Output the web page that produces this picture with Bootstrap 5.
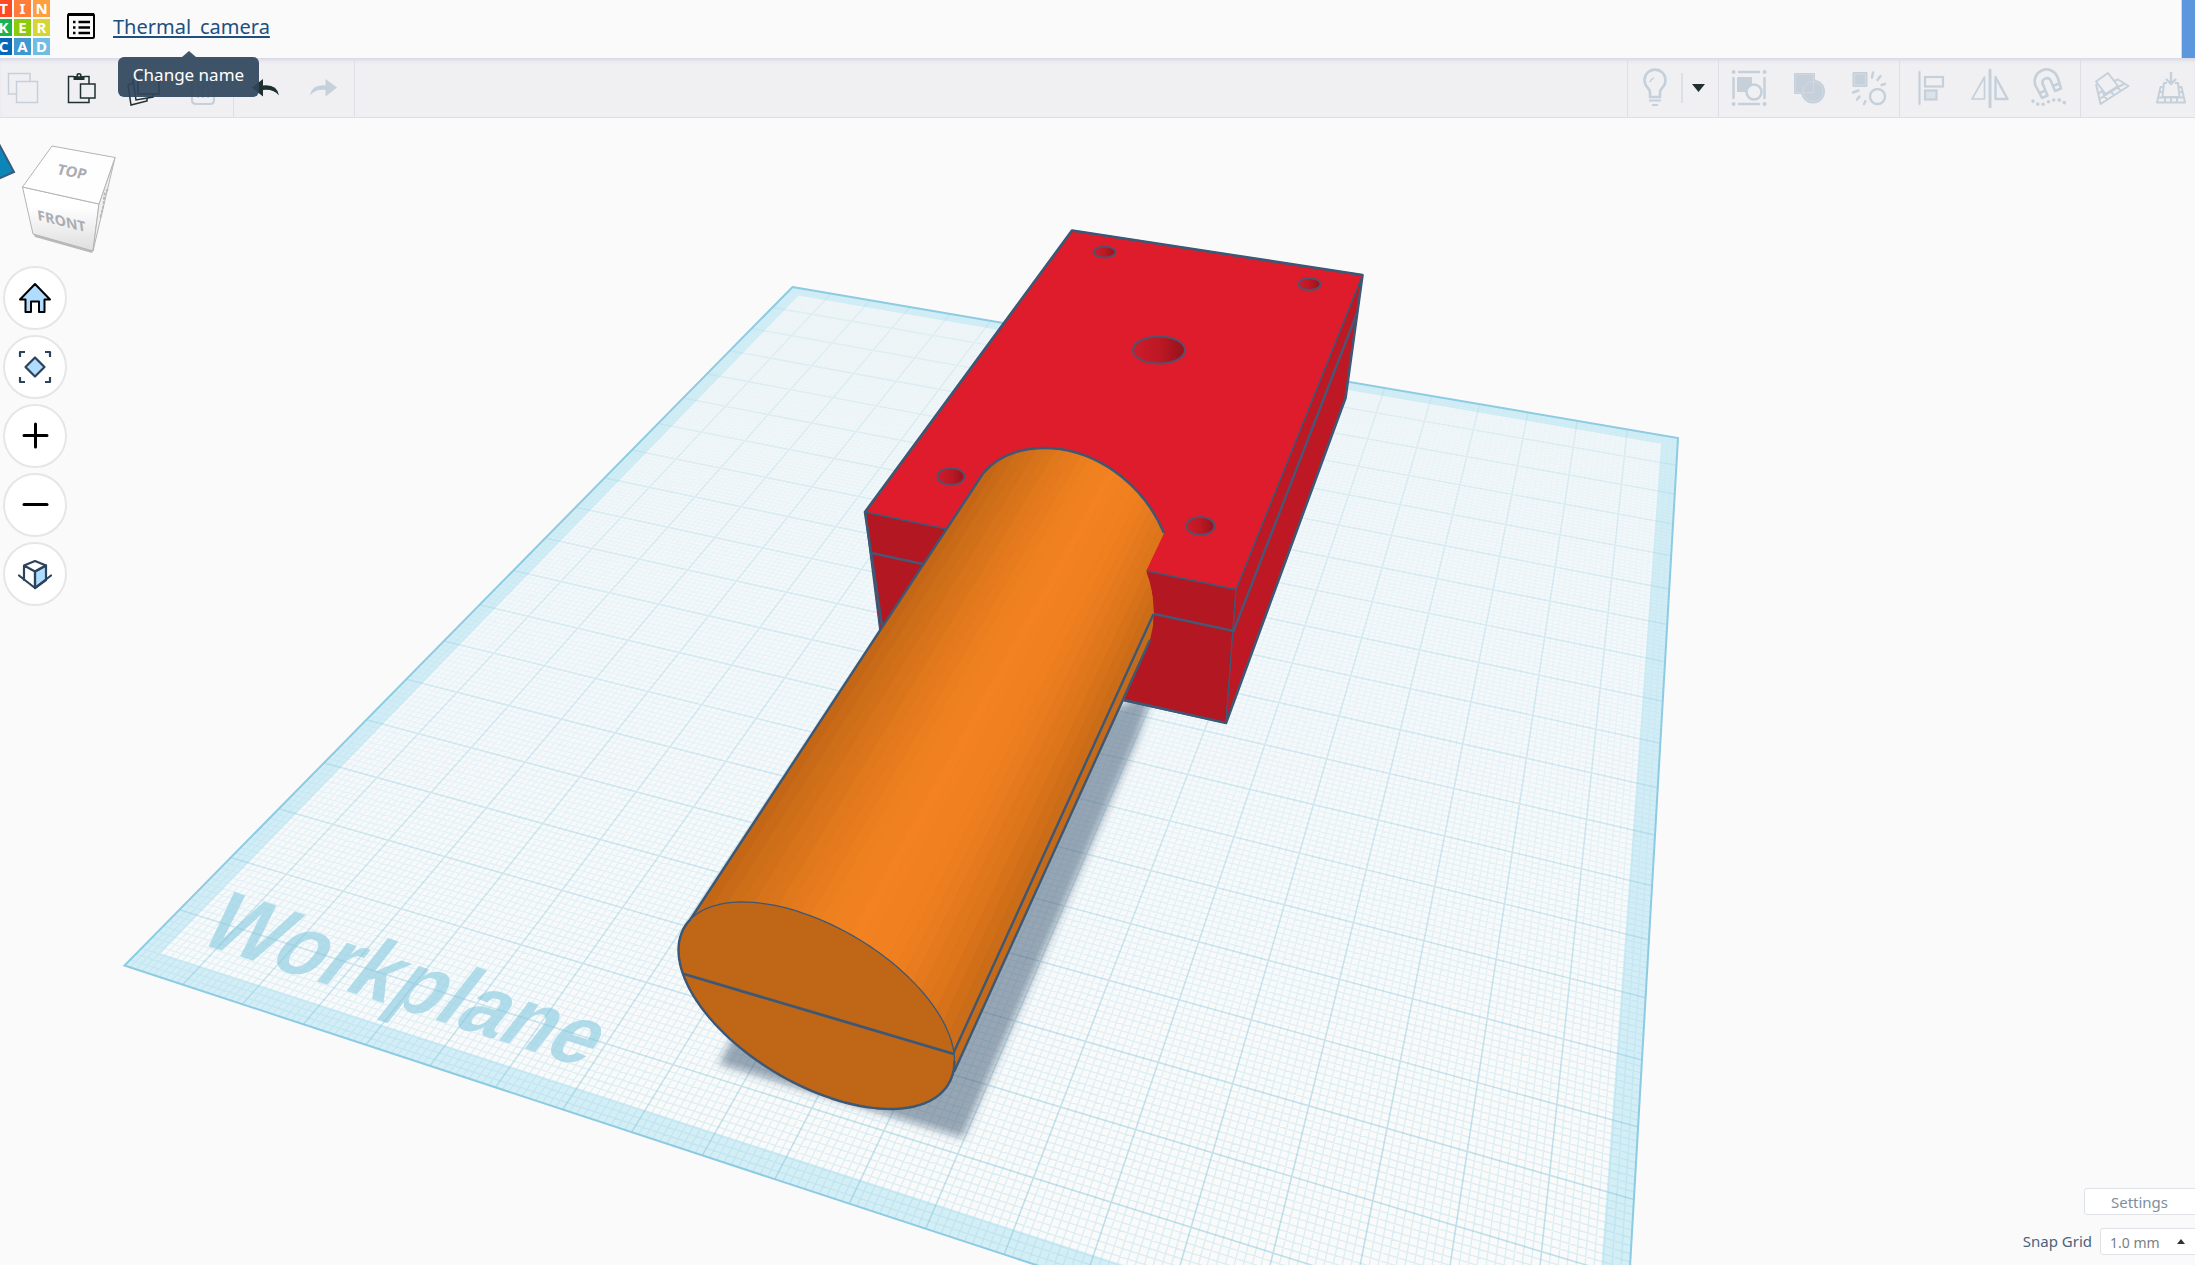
<!DOCTYPE html>
<html lang="en">
<head>
<meta charset="utf-8">
<meta name="viewport" content="width=device-width, initial-scale=1">
<title>Thermal_camera</title>
<link href="https://cdn.jsdelivr.net/npm/bootstrap@5.3.0/dist/css/bootstrap.min.css" rel="stylesheet">
<script src="https://cdn.jsdelivr.net/npm/bootstrap@5.3.0/dist/js/bootstrap.bundle.min.js"></script>
<style>
  body { font-family: "Noto Sans", sans-serif; background: #fafafb; color: #4c6279; }
  .app-header { height: 58px; background: #fafafa; }
  .logo-grid { display: grid; grid-template-columns: repeat(3, 17px); gap: 2px; margin: 0 0 0 -5px; text-decoration: none; }
  .logo-grid span { height: 17px; font: 700 15px/17px "Noto Sans", sans-serif; color: #fff; text-align: center; }
  .menu-btn { margin-left: 17px; margin-top: 12px; width: 28px; height: 28px; }
  .design-name { margin: 13px 0 0 18px; font-size: 20px; line-height: 28px; color: #1d4f80; text-decoration: underline; text-decoration-thickness: 2px; text-underline-offset: 2px; }
  .side-tab { width: 14px; background: #5c96dc; border-left: 1px solid #cbd9ea; }
  .tip { position: absolute; left: 118px; top: 57px; z-index: 5; background: rgba(48,69,92,.92); color: #fff; border-radius: 6px; width: 141px; height: 40px; font-size: 17px; line-height: 35px; text-align: center; }
  .tip::before { content: ""; position: absolute; left: 64px; top: -6px; border: 7px solid transparent; border-top: 0; border-bottom: 6px solid rgba(48,69,92,.92); }
  .tools { height: 60px; background: #f0f0f3; border-bottom: 1px solid #dcdfe4; box-shadow: inset 0 4px 4px -2px #d3d4e2; overflow: hidden; }
  .tools-left { margin-left: -7px; }
  .tools-right { margin-right: -6px; }
  .tool-group { display: flex; border-right: 1px solid #dcdfe4; }
  .tools-right .tool-group { border-right: 0; border-left: 1px solid #dcdfe4; }
  .tool { width: 60px; color: #c5d0db; }
  .tool.live { color: #1f302f; }
  .tool.bulb { width: 53px; }
  .tool.pick { width: 37px; padding-right: 2px; }
  .plain { background: none; border: 0; padding: 0; display: flex; align-items: center; justify-content: center; }
  svg { display: block; flex: none; fill: none; stroke: currentColor; }
  .stage { min-height: 0; overflow: hidden; }
  .scene { width: 100%; height: 100%; stroke: none; }
  .view-cube { position: absolute; left: 0; top: 20px; stroke: none; }
  .view-nav { position: absolute; left: 3px; top: 148px; display: flex; flex-direction: column; gap: 5px; }
  .nav-round { width: 64px; height: 64px; border: 2px solid #e6e6e8; border-radius: 50%; background: #fff; color: #2d435c; }
  .nav-round.ink { color: #000; }
  .corner-panel { position: absolute; right: -6px; bottom: 10px; display: flex; flex-direction: column; align-items: flex-end; gap: 13px; font-size: 15px; line-height: 27px; }
  .settings-btn { width: 117px; height: 27px; padding: 0 6px 0 0; border: 1px solid #dfe2e6; border-radius: 3px; background: #fff; color: #808f9e; font-size: 15px; line-height: 20px; }
  .snap-box { position: relative; margin-left: 8px; }
  .snap-box select { display: block; appearance: none; width: 101px; height: 27px; padding: 0 0 0 9px; border: 1px solid #dfe2e6; border-radius: 3px; background: #fff; color: #7c7f83; font-size: 14px; }
  .snap-box svg { position: absolute; right: 16px; top: 11px; pointer-events: none; }
</style>
</head>
<body class="vh-100 overflow-hidden d-flex flex-column">

<header class="app-header d-flex align-items-start flex-shrink-0">
  <a href="#" class="logo-grid" aria-label="Tinkercad">
    <span style="background:#ff4a26">T</span><span style="background:#ff7d3b">I</span><span style="background:#ff9f3e">N</span>
    <span style="background:#17b451">K</span><span style="background:#8ccb0b">E</span><span style="background:#d6d534">R</span>
    <span style="background:#0067b9">C</span><span style="background:#3f98cf">A</span><span style="background:#6fbde2">D</span>
  </a>
  <button class="plain menu-btn" aria-label="Designs list">
    <svg width="28" height="28" viewBox="0 0 28 28"><rect x="1" y="2" width="26" height="24" rx="1.500" stroke="#000" stroke-width="2"/><path d="M1 2.500h26" stroke="#000" stroke-width="3"/><path d="M6 10h2.500M11.500 10h11.500M6 15.500h2.500M11.500 15.500h11.500M6 21h2.500M11.500 21h11.500" stroke="#000" stroke-width="2.600"/></svg>
  </button>
  <a href="#" class="design-name">Thermal_camera</a>
  <div class="side-tab ms-auto align-self-stretch"></div>
</header>
<div class="tip" role="tooltip">Change name</div>

<div class="tools d-flex justify-content-between flex-shrink-0">
  <div class="tools-left d-flex">
    <div class="tool-group">
      <button class="plain tool" aria-label="Copy"><svg width="40" height="40" stroke-width="1.500"><path d="M13 26H5.500V5.500H27V13"/><rect x="13.500" y="13.500" width="21" height="21"/></svg></button>
      <button class="plain tool live" aria-label="Paste"><svg width="40" height="40" stroke-width="1.500"><path d="M11 8.500H5.500v26H26V30M21 8.500h5V16"/><path d="M10.500 12V8h3V6q2-2 5 0v2h3v4z" fill="currentColor" stroke="none"/><circle cx="16" cy="7.500" r="1" fill="#f0f0f3" stroke="none"/><rect x="17.500" y="16" width="14.500" height="14"/></svg></button>
      <button class="plain tool live" aria-label="Duplicate"><svg width="40" height="40" stroke-width="1.500"><rect x="15" y="6" width="21" height="20"/><path d="M15 10l-5 2 3 20 17-3v-3"/><path d="M10 15l-5 2 3 20 16-4v-3"/></svg></button>
      <button class="plain tool" aria-label="Delete"><svg width="40" height="40" stroke-width="2.200"><path d="M6 9h28M15 9V5h10v4M9 10v22q0 4 4 4h14q4 0 4-4V10M15 14v16M20 14v16M25 14v16"/></svg></button>
    </div>
    <div class="tool-group">
      <button class="plain tool live" aria-label="Undo"><svg width="40" height="40"><path d="M8 19.500L19 11v6.500Q33 16 35 27.500 30 21 19 22v6.500z" fill="currentColor" stroke="none"/></svg></button>
      <button class="plain tool" aria-label="Redo"><svg width="40" height="40"><path d="M33 19.500L21.500 11v6.500Q8 16 6 27.500 11 21 21.500 22v6.500z" fill="currentColor" stroke="none"/></svg></button>
    </div>
  </div>
  <div class="tools-right d-flex">
    <div class="tool-group">
      <button class="plain tool bulb" aria-label="Show all"><svg width="40" height="40"><path d="M15 29v-4q0-3-2.500-5.500a10.500 10.500 0 1 1 15 0Q25 22 25 25v4z" stroke-width="2.600"/><path d="M15 14q1-3 4-4" stroke-width="1.600"/><path d="M14 32.500h12M17 37h6" stroke-width="2.200"/></svg></button>
      <button class="plain tool pick live" aria-label="Visibility options"><svg width="35" height="40"><path d="M1 5v30" stroke="#dcdfe4" stroke-width="2"/><path d="M11 16h13l-6.500 8z" fill="currentColor" stroke="none"/></svg></button>
    </div>
    <div class="tool-group">
      <button class="plain tool" aria-label="Group"><svg width="40" height="40" stroke-width="2.500" stroke-linecap="round"><path d="M10 4h20M10 36h20M4.500 10v20M35.500 10v20"/><path d="M4.500 4h.1M35.500 4h.1M4.500 36h.1M35.500 36h.1" stroke-width="4"/><rect x="8" y="9" width="15" height="15" rx="1" fill="currentColor" stroke="none"/><circle cx="25" cy="24" r="7.500" fill="#f0f0f3"/></svg></button>
      <button class="plain tool" aria-label="Union"><svg width="40" height="40"><rect x="5" y="5" width="21" height="21" rx="1" fill="currentColor" stroke="none"/><circle cx="24" cy="23.500" r="12" fill="currentColor" stroke="none"/><rect x="6.500" y="6.500" width="18" height="18" stroke="#d3dce4" stroke-width=".7"/><circle cx="24" cy="23.500" r="10" stroke="#d3dce4" stroke-width=".7"/></svg></button>
      <button class="plain tool" aria-label="Ungroup"><svg width="40" height="40" stroke-width="2.400" stroke-linecap="round"><rect x="3.500" y="4" width="15" height="15" rx="1" fill="currentColor" stroke="none"/><rect x="5.500" y="6" width="11" height="11" stroke="#dbe2e9" stroke-width=".7"/><circle cx="28.500" cy="28.500" r="7.500"/><path d="M24 4.500l-1 5M31.500 8l-3 4M36 16l-3.500 1M4 24.500l5.500-2M8 31.500l2.500-3M15 36l1.500-3"/></svg></button>
    </div>
    <div class="tool-group">
      <button class="plain tool" aria-label="Align"><svg width="40" height="40" stroke-width="2.200" stroke-linecap="round"><path d="M9.500 4v32"/><rect x="15" y="9" width="18" height="9.500"/><rect x="15" y="22.500" width="11.500" height="9" fill="#dbe2e9"/></svg></button>
      <button class="plain tool" aria-label="Mirror"><svg width="40" height="40" stroke-linejoin="round"><path d="M20 2v37" stroke-width="3" stroke-linecap="round"/><path d="M14.500 9v22H2z" stroke-width="1.700"/><path d="M25.500 9v22H37.500z" stroke-width="2.400"/></svg></button>
      <button class="plain tool" aria-label="Magnet"><svg width="40" height="40" stroke-width="2.600"><path d="M12 30L5.500 17.500a11.500 11.500 0 0 1 22-8.500L31 20.500l-6 2.500-4.500-11a4.500 4.500 0 0 0-8 3.500l5 12z" stroke-linejoin="round"/><path d="M9.500 25l6-2.500M23 18l6-2.500"/><path d="M3 33q6 6 13 2t13-3l8 4" stroke-width="3.400" stroke-dasharray=".1 5.500" stroke-linecap="round"/></svg></button>
    </div>
    <div class="tool-group">
      <button class="plain tool" aria-label="Workplane"><svg width="40" height="40" stroke-width="2" stroke-linejoin="round"><path d="M5 13.500L17 5l10 13-12.500 8z"/><path d="M5 16l4.500 20L37.500 18 27 11.500l-3 1M7 26l4-3 3 4M8.500 31l22-14M16 31.500l-4-6M23 27l-4-4M30 23l-4-4M33 16l-4 2"/></svg></button>
      <button class="plain tool" aria-label="Drop"><svg width="40" height="40" stroke-width="2" stroke-linejoin="round"><path d="M20 4v11M15 11l5 5 5-5" stroke-width="2.400"/><path d="M16 15h-3l-1.500 14h17L27 15h-3M12 19H9.500L6 34.500h28L30.500 19H28M8 29.500h24M14 30v4M20 30v4M26 30v4M9 24h2M29 24h2"/></svg></button>
    </div>
  </div>
</div>

<main class="stage flex-grow-1 position-relative">
  <svg class="scene" viewBox="0 118 2195 1147" preserveAspectRatio="xMidYMid slice" role="img" aria-label="3D view of the thermal camera on the workplane">
    <defs>
      <filter id="soft" x="-10%" y="-10%" width="120%" height="120%"><feGaussianBlur stdDeviation="4"/></filter>
      <linearGradient id="hole"><stop offset="0" stop-color="#cf1b29"/><stop offset=".5" stop-color="#bd1824"/><stop offset="1" stop-color="#94121c"/></linearGradient>
      <linearGradient id="tint" x1="0" y1="0" x2="0" y2="1"><stop offset="0" stop-color="#eff5f7"/><stop offset=".25" stop-color="#f4f8fa"/><stop offset=".7" stop-color="#fafafa"/></linearGradient>
      <linearGradient id="fineLine" gradientUnits="userSpaceOnUse" x1="0" y1="287" x2="0" y2="1200"><stop offset="0" stop-color="#8fd0e2" stop-opacity=".03"/><stop offset=".4" stop-color="#8fd0e2" stop-opacity=".12"/><stop offset="1" stop-color="#8fd0e2" stop-opacity=".3"/></linearGradient>
      <linearGradient id="boldLine" gradientUnits="userSpaceOnUse" x1="0" y1="287" x2="0" y2="1200"><stop offset="0" stop-color="#7fc3da" stop-opacity=".13"/><stop offset=".4" stop-color="#7fc3da" stop-opacity=".27"/><stop offset="1" stop-color="#7fc3da" stop-opacity=".48"/></linearGradient>
      <clipPath id="barrel"><path d="M983 473.500C1000 453 1028 445 1060 449 1105 456 1145 488 1164 533L1146 571Q1154 592 1153.500 614L953 1054 690 920z"/></clipPath>
    </defs>
    <path id="plane" fill="url(#tint)"/>
    <path id="band" fill="#cdebf4" fill-opacity=".85" fill-rule="evenodd"/>
    <text transform="matrix(.76 .246 -.57 .73 195 942)" font-family="Liberation Sans, sans-serif" font-weight="700" font-size="100" fill="#b3dcea">Workplane</text>
    <path id="minor" stroke="url(#fineLine)" stroke-width="1.300"/>
    <path id="major" stroke="url(#boldLine)" stroke-width="1.600"/>
    <path id="rim" stroke="#8ccbe2" stroke-width="2"/>
    <path d="M1154 690L1136 742 963 1138 930 1128 719 1064 738 1028 1090 720z" fill="#405a75" fill-opacity=".53" filter="url(#soft)"/>

    <g stroke="#3d5875" stroke-linejoin="round" stroke-width="1.300">
      <path d="M865 512L1236 589.500 1226 723 882 648z" fill="#b21722"/>
      <path d="M1236 589.500L1362.500 275 1345.500 398 1226 723z" fill="#be1824"/>
      <path d="M1072 230.500L1362.500 275 1236 589.500 865 512z" fill="#df1c2b"/>
      <path d="M871.500 553L1233.600 631 1357 313" fill="none" stroke="#4a5674" stroke-width="2.500"/>
      <path d="M882 626L865 512 1072 230.500 1362.500 275 1345.500 398 1226 723 1122 699.500" fill="none" stroke-width="2.600"/>
      <g fill="url(#hole)" stroke="#56506c" stroke-width="2">
        <ellipse cx="1104.600" cy="252" rx="11" ry="5.500"/><ellipse cx="1309.500" cy="284" rx="11" ry="6"/>
        <ellipse cx="1159" cy="350" rx="26" ry="13.500"/><ellipse cx="951" cy="476.500" rx="13.500" ry="8.500"/><ellipse cx="1200.500" cy="526" rx="14" ry="9"/>
      </g>
    </g>
    <g id="strips" clip-path="url(#barrel)"></g>
    <g fill="none" stroke="#3d5875" stroke-width="2.400" stroke-linejoin="round">
      <path d="M1153.500 614L953 1054 954 1072 1124 700 1150 640 1153 626z" fill="#c46a18" stroke="none"/>
      <path d="M983 473.500C1000 453 1028 445 1060 449 1105 456 1145 488 1164 533"/>
      <path d="M983 473.500L690 920M1153.500 614L953 1054M1150 640L954 1072"/>
      <path id="cap" fill="#c06617" stroke-width="1.300"/>
      <path id="capLow"/>
      <path d="M684 974L954 1054" stroke-width="2.800"/>
    </g>
  </svg>

  <svg class="view-cube" width="130" height="130" viewBox="0 138 130 130">
    <defs><linearGradient id="cubeFront" x1="0" y1="0" x2="0" y2="1"><stop offset=".3" stop-color="#fff"/><stop offset="1" stop-color="#dedede"/></linearGradient></defs>
    <path d="M-2 142L14 172-2 179z" fill="#0a87b8" stroke="#3c5a7c" stroke-width="2"/>
    <path d="M33 233l2 4 57 16 2-4z" fill="#b9b9b9"/>
    <g stroke="#b4b4b4" stroke-linejoin="round">
      <path d="M22.500 187L99 204 93 251 33 234z" fill="url(#cubeFront)"/>
      <path d="M99 204L115 157.500 93 251z" fill="#f1f1f1"/>
      <path d="M52 146L115 157.500 99 204 22.500 187z" fill="#fefefe"/>
    </g>
    <path d="M108 189q-4 4-4 10t-4 20" stroke="#b9bbc0" stroke-width="2" stroke-dasharray="3 1.500"/>
    <g font-family="Noto Sans, sans-serif" font-weight="700" fill="#a9adb3">
      <text transform="matrix(.98 .19 -.3 .93 56 174)" font-size="15">TOP</text>
      <text transform="matrix(.95 .24 .12 .95 38 220)" font-size="15">FRONT</text>
    </g>
  </svg>

  <nav class="view-nav" aria-label="View">
    <button class="plain nav-round" aria-label="Home view"><svg width="36" height="36" stroke-linejoin="round" stroke-width="2"><path d="M18 4L3 19.500h5.500V32H14V21.500h8V32h5.500V19.500H33z" fill="#b0dcff" stroke="#000"/></svg></button>
    <button class="plain nav-round" aria-label="Fit view"><svg width="36" height="36" stroke-width="2.200" stroke-linejoin="round"><path d="M3 8V3h5M28 3h5v5M3 28v5h5M33 28v5h-5"/><path d="M18 8.500l9.500 9.500L18 27.500 8.500 18z" fill="#b0dcff"/></svg></button>
    <button class="plain nav-round ink" aria-label="Zoom in"><svg width="36" height="36" stroke-width="3" stroke-linecap="round"><path d="M7 17.500h23M18.500 6v23"/></svg></button>
    <button class="plain nav-round ink" aria-label="Zoom out"><svg width="36" height="36" stroke-width="3" stroke-linecap="round"><path d="M7 17.500h23"/></svg></button>
    <button class="plain nav-round" aria-label="Orthographic view"><svg width="36" height="36" stroke-width="2.200" stroke-linejoin="round" stroke-linecap="round"><path d="M18 15.500l11-6V24l-11 8z" fill="#b0dcff"/><path d="M18 5l11 4.500-11 6-11-6zM7 9.500V24M18 15.500V32M2 19.500L18 32l16-12.500"/></svg></button>
  </nav>

  <div class="corner-panel">
    <button class="settings-btn">Settings</button>
    <div class="d-flex align-items-center">
      <label for="snap">Snap Grid</label>
      <div class="snap-box">
        <select id="snap"><option>1.0 mm</option></select>
        <svg width="8" height="5"><path d="M0 5L4 0l4 5z" fill="#333" stroke="none"/></svg>
      </div>
    </div>
  </div>
</main>

<script>
  const set = (id, d) => document.getElementById(id).setAttribute('d', d);
  // Projection of the 200 x 200 mm plane: corners in order TL, TR, BR, BL
  const [p0, p1, p2, p3] = [[792.5, 287], [1678, 438], [1619, 1456.5], [124.5, 965.5]];
  const sx = p0[0] - p1[0] + p2[0] - p3[0], sy = p0[1] - p1[1] + p2[1] - p3[1];
  const ax = p1[0] - p2[0], bx = p3[0] - p2[0], ay = p1[1] - p2[1], by = p3[1] - p2[1];
  const det = ax * by - bx * ay, g = (sx * by - bx * sy) / det, h = (ax * sy - sx * ay) / det;
  const at = (mx, my) => {
    const u = mx / 200, v = my / 200, w = g * u + h * v + 1;
    return [((p1[0] - p0[0] + g * p1[0]) * u + (p3[0] - p0[0] + h * p3[0]) * v + p0[0]) / w,
            ((p1[1] - p0[1] + g * p1[1]) * u + (p3[1] - p0[1] + h * p3[1]) * v + p0[1]) / w].map(n => n.toFixed(2));
  };
  const box = m => `M${at(m, m)}L${at(200 - m, m)}L${at(200 - m, 200 - m)}L${at(m, 200 - m)}z`;
  set('plane', box(0)); set('rim', box(0)); set('band', box(0) + box(3.2));
  let minor = '', major = '';
  for (let i = 1; i < 200; i++) {
    const d = `M${at(i, 0)}L${at(i, 200)}M${at(0, i)}L${at(200, i)}`;
    if (i % 10) minor += d; else major += d;
  }
  set('minor', minor); set('major', major);

  // End cap: tilted ellipse sampled from its right side round the bottom
  const rim = deg => {
    const t = deg * Math.PI / 180;
    return [816.5 + 138 * Math.cos(t), 1005.5 + 103.5 * Math.cos(t - 1.006)];
  };
  const arcFrom = (a, b) => {
    let d = 'M' + rim(a);
    for (let t = a + 3; t <= b; t += 3) d += 'L' + rim(t);
    return d;
  };
  set('cap', arcFrom(0, 360) + 'z');
  set('capLow', arcFrom(0, 204));

  // Faceted shading of the barrel
  const stops = [[0, 192, 100, 22], [.1, 206, 110, 24], [.25, 224, 120, 28], [.4, 238, 128, 31], [.52, 243, 130, 33], [.7, 238, 127, 31], [.86, 222, 117, 27], [1, 200, 106, 24]];
  const shade = t => {
    const i = Math.max(1, stops.findIndex(s => s[0] >= t)), a = stops[i - 1], b = stops[i], k = (t - a[0]) / (b[0] - a[0]);
    return `rgb(${[1, 2, 3].map(j => Math.round(a[j] + (b[j] - a[j]) * k))})`;
  };
  const ray = t => {
    const q = [690 + 263 * t, 920 + 134 * t], r = [983 + 170.5 * t, 473.5 + 140.5 * t], dx = r[0] - q[0], dy = r[1] - q[1];
    return [[q[0] - dx * .1, q[1] - dy * .1], [r[0] + dx * .4, r[1] + dy * .4]];
  };
  const n = 26;
  let strips = `<path d="M640 400h600v700H640z" fill="${shade(1)}"/>`;
  for (let i = 0; i < n; i++) {
    const a = ray(i / n), b = ray((i + 1) / n), c = shade((i + .5) / n);
    strips += `<path d="M${a[0]}L${a[1]}L${b[1]}L${b[0]}z" fill="${c}" stroke="${c}"/>`;
  }
  document.getElementById('strips').innerHTML = strips;
</script>
</body>
</html>
